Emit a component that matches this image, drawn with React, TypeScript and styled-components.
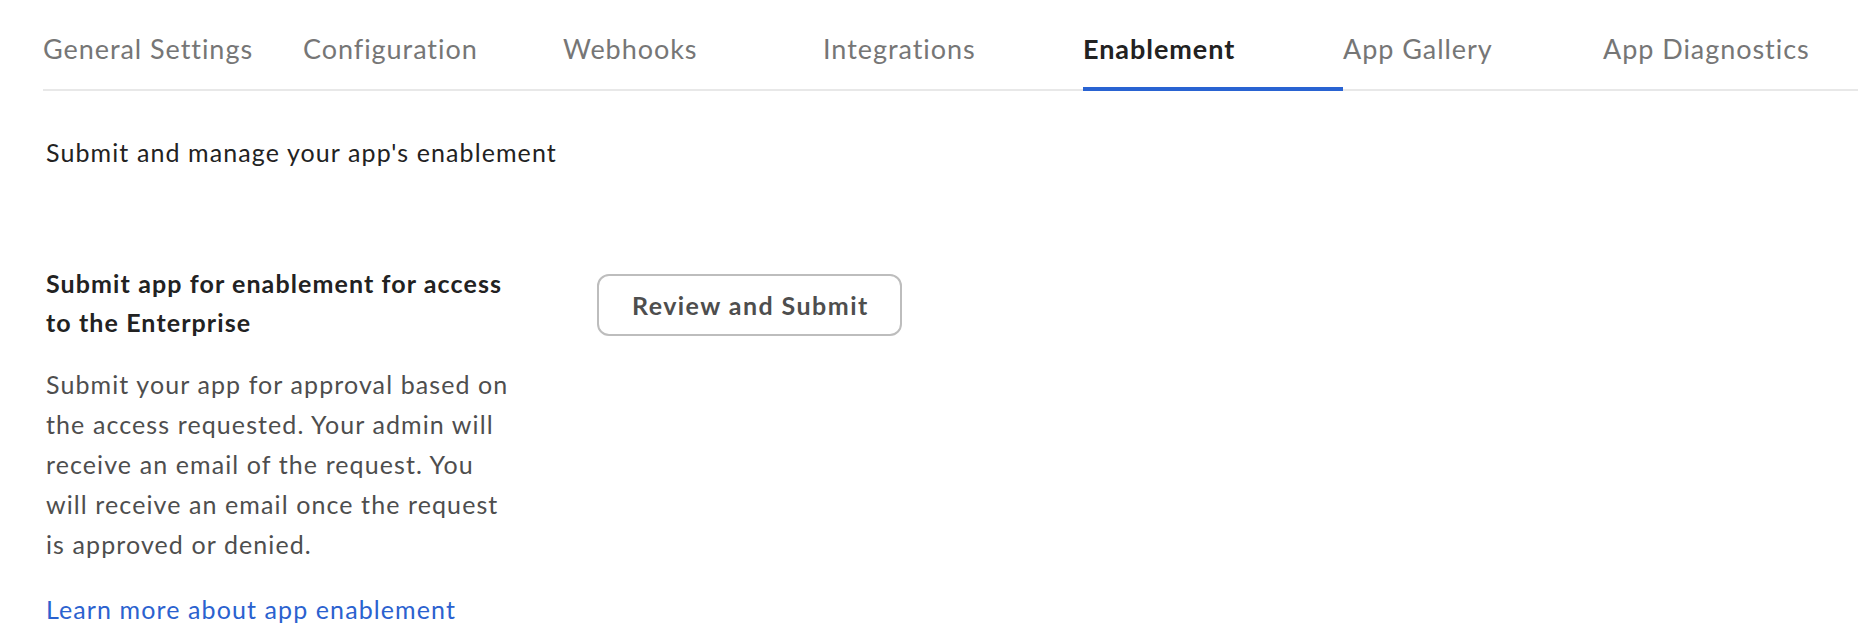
import React from "react";
import styled, { createGlobalStyle } from "styled-components";

const GlobalStyle = createGlobalStyle`
  html, body {
    margin: 0;
    padding: 0;
    background: #ffffff;
  }
  body {
    font-family: Lato, "Open Sans", "Liberation Sans", sans-serif;
    color: #222222;
    overflow: hidden;
  }
  * { box-sizing: border-box; }
`;

const Page = styled.div`
  display: flex;
  flex-direction: column;
  width: 1858px;
  min-height: 642px;
`;

const TabBar = styled.nav`
  display: flex;
  margin-left: 43px;
  box-shadow: inset 0 -2px 0 #e8e8e8;
`;

const Tab = styled.a<{ $active?: boolean }>`
  flex: 0 0 260px;
  padding: 29px 0 18px;
  font-size: 27px;
  line-height: 40px;
  letter-spacing: 0.95px;
  font-weight: ${(p) => (p.$active ? 700 : 400)};
  color: ${(p) => (p.$active ? "#222222" : "#767676")};
  border-bottom: 4px solid ${(p) => (p.$active ? "#2963d2" : "transparent")};
  white-space: nowrap;
  cursor: pointer;
  &:last-child {
    flex-shrink: 1;
  }
`;

const Content = styled.main`
  display: flex;
  flex-direction: column;
  padding-left: 46px;
  font-size: 25px;
  letter-spacing: 1.1px;
`;

const Intro = styled.p`
  margin: 43px 0 0;
  line-height: 36px;
  color: #222222;
`;

const Section = styled.section`
  display: flex;
  align-items: flex-start;
  gap: 83px;
  margin-top: 94px;
`;

const InfoColumn = styled.div`
  display: flex;
  flex-direction: column;
  width: 468px;
`;

const Heading = styled.h3`
  margin: 0;
  font-size: 25px;
  line-height: 39px;
  font-weight: 700;
  color: #222222;
`;

const Description = styled.p`
  margin: 22px 0 0;
  line-height: 40px;
  color: #4e4e4e;
`;

const LearnLink = styled.a`
  margin-top: 25px;
  line-height: 40px;
  color: #2b62cf;
  text-decoration: none;
  cursor: pointer;
`;

const OutlineButton = styled.button`
  margin-top: 10px;
  height: 62px;
  padding: 0 31px 0 33px;
  border: 2px solid #bdbdbd;
  border-radius: 12px;
  background: #ffffff;
  font-family: inherit;
  font-size: 25px;
  letter-spacing: 1.45px;
  font-weight: 700;
  color: #4e4e4e;
  cursor: pointer;
  white-space: nowrap;
`;

const tabs = [
  "General Settings",
  "Configuration",
  "Webhooks",
  "Integrations",
  "Enablement",
  "App Gallery",
  "App Diagnostics",
];

export default function App() {
  return (
    <>
      <GlobalStyle />
      <Page>
        <TabBar>
          {tabs.map((t) => (
            <Tab key={t} $active={t === "Enablement"}>
              {t}
            </Tab>
          ))}
        </TabBar>
        <Content>
          <Intro>Submit and manage your app's enablement</Intro>
          <Section>
            <InfoColumn>
              <Heading>
                Submit app for enablement for access to the Enterprise
              </Heading>
              <Description>
                Submit your app for approval based on the access requested.
                Your admin will receive an email of the request. You will
                receive an email once the request is approved or denied.
              </Description>
              <LearnLink>Learn more about app enablement</LearnLink>
            </InfoColumn>
            <OutlineButton>Review and Submit</OutlineButton>
          </Section>
        </Content>
      </Page>
    </>
  );
}
